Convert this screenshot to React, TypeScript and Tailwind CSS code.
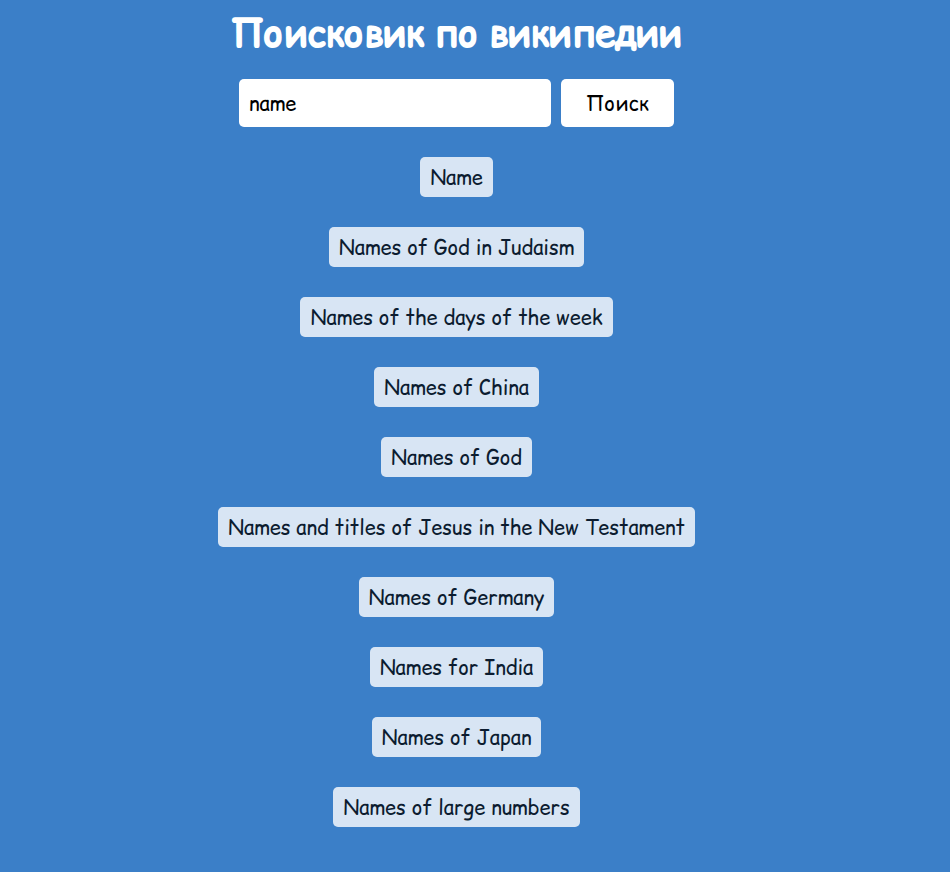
const results = [
  "Name",
  "Names of God in Judaism",
  "Names of the days of the week",
  "Names of China",
  "Names of God",
  "Names and titles of Jesus in the New Testament",
  "Names of Germany",
  "Names for India",
  "Names of Japan",
  "Names of large numbers",
];

export default function App() {
  return (
    <div className="min-h-screen bg-[#3b7fc8] pr-[37px] pb-[45px] font-['Comic_Relief','Comic_Sans_MS','Lato',cursive] text-[20px] text-black">
      <main className="flex flex-col items-center">
        <h1 className="pt-[3px] text-[36px] leading-[60px] font-normal text-white [-webkit-text-stroke:2px_white]">
          Поисковик по википедии
        </h1>
        <form className="mt-4 flex gap-[10px]" onSubmit={(e) => e.preventDefault()}>
          <input
            aria-label="Поиск по википедии"
            defaultValue="name"
            className="h-12 w-[312px] rounded-[5px] bg-white px-[10px] pt-[2px] outline-none"
          />
          <button type="submit" className="h-12 w-[113px] rounded-[5px] bg-white pt-[2px]">
            Поиск
          </button>
        </form>
        <ul className="mt-[30px] flex flex-col items-center gap-[30px]">
          {results.map((title) => (
            <li key={title}>
              <a
                href="#"
                className="block rounded-[5px] bg-white/80 px-[10px] pt-[2px] leading-[38px] whitespace-nowrap text-[#0c1c30]"
              >
                {title}
              </a>
            </li>
          ))}
        </ul>
      </main>
    </div>
  );
}
